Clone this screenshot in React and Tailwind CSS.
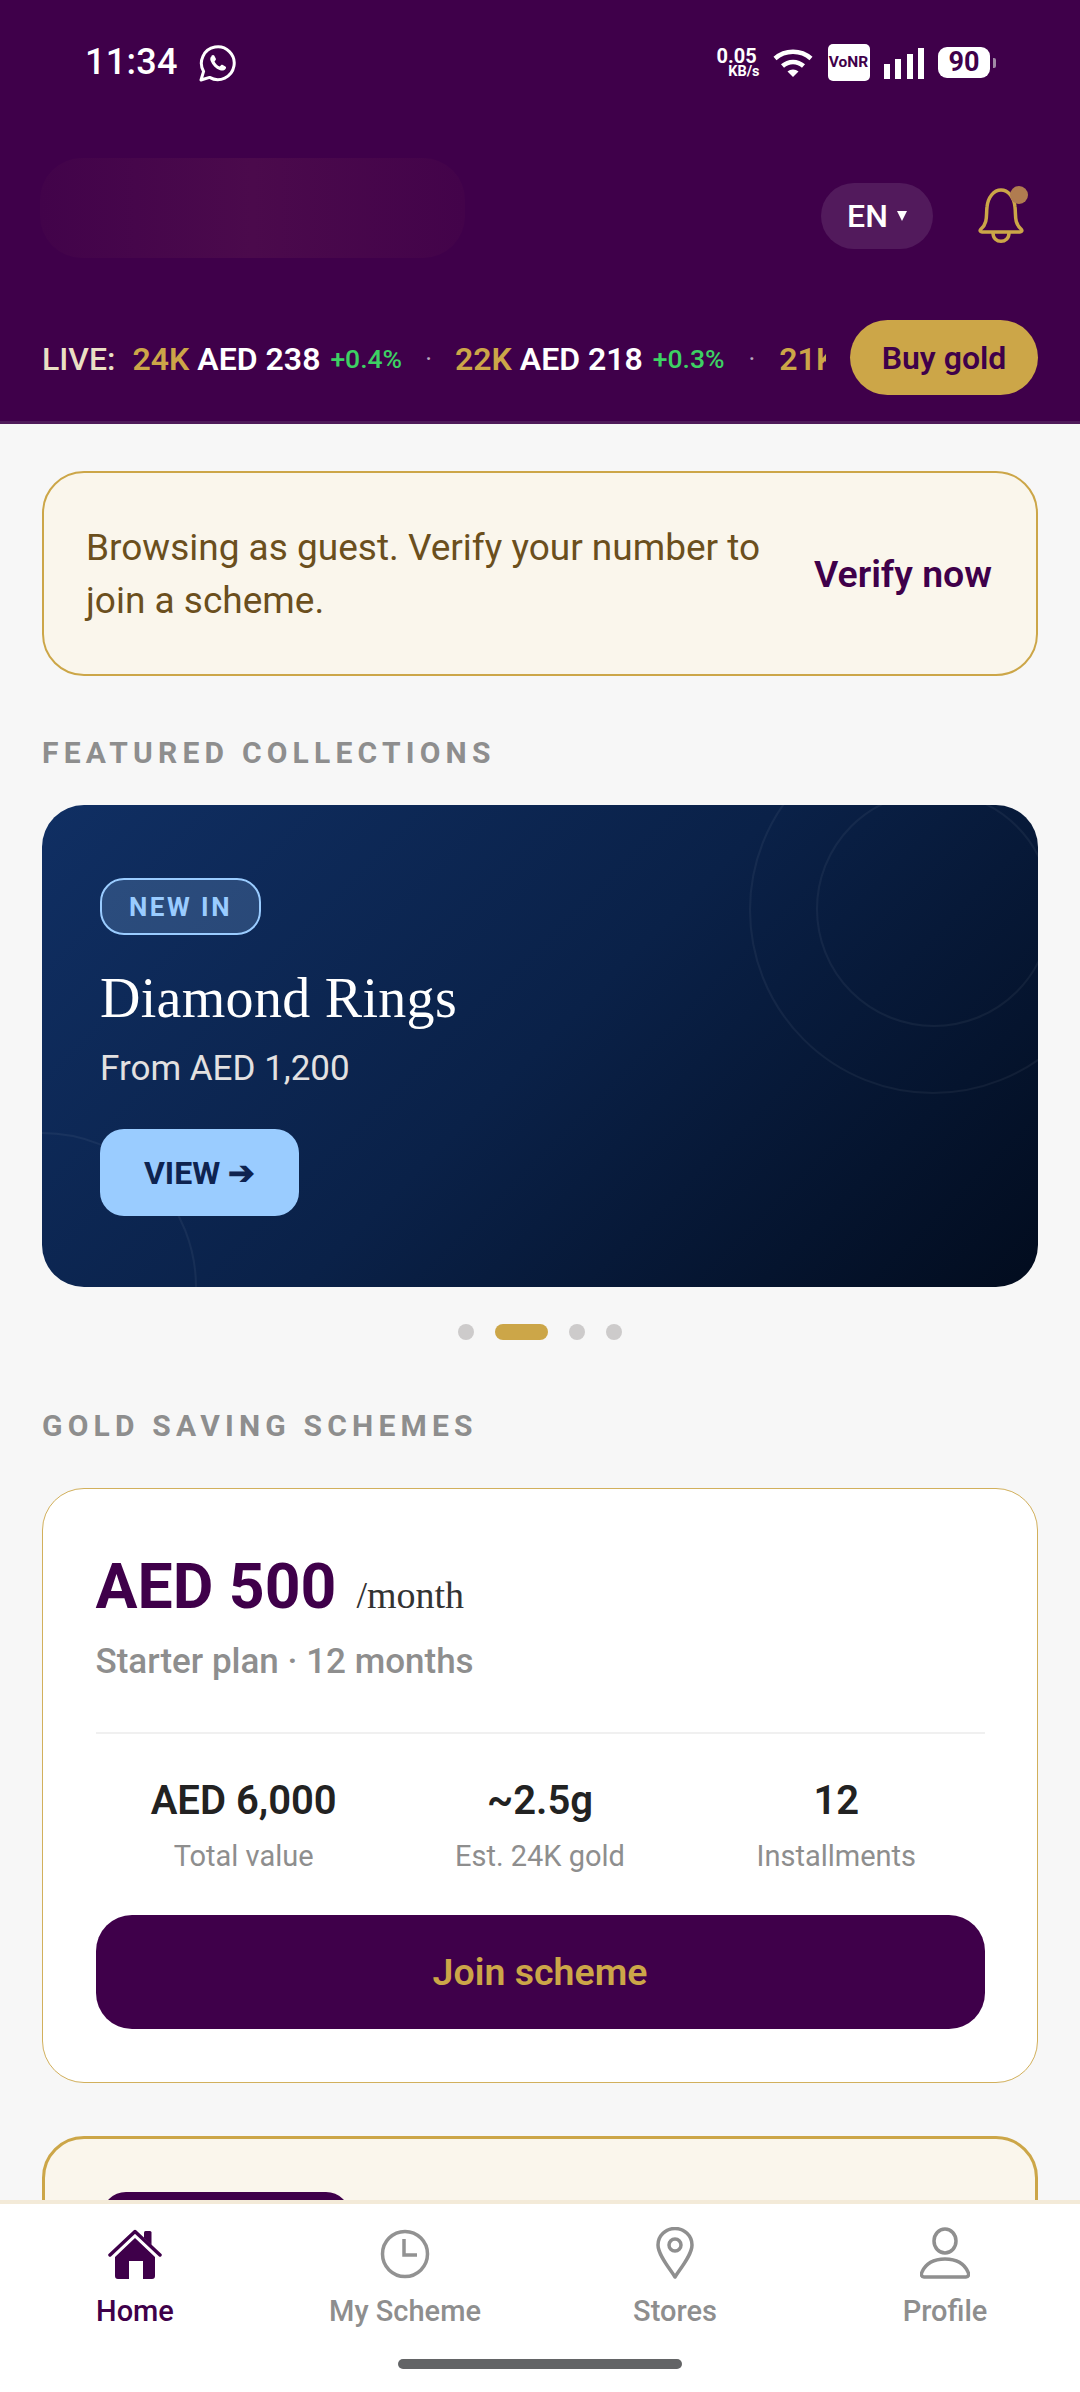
export default function App() {
  const stats = [
    ["AED 6,000", "Total value"],
    ["~2.5g", "Est. 24K gold"],
    ["12", "Installments"],
  ];
  return (
    <div className="w-[1080px] h-[2392px] overflow-hidden flex flex-col bg-[#f7f7f7] font-['Roboto',sans-serif]">
      {/* Header */}
      <header className="h-[424px] shrink-0 bg-[#3f004a] border-b-[3px] border-[#4f1a5a] flex flex-col">
        <div className="h-[124px] shrink-0 pl-[85px] pr-[84px] pt-[42px] flex items-start justify-between">
          <div className="flex items-center gap-[20px] h-[40px]">
            <span className="text-[36px] leading-[40px] font-medium text-white tracking-[0.3px]">11:34</span>
            <svg width="38" height="38" viewBox="0 0 38 38" className="mt-[3px]">
              <path d="M3 35 L5.600 26.400 A16.400 16.400 0 1 1 11.600 32.400 Z" fill="none" stroke="#fff" strokeWidth="3" strokeLinejoin="round" />
              <path d="M13.600 10.600 c1-.9 2-.9 2.600 0 l1.600 2.800 c.3.7.2 1.200-.3 1.800 l-1 1.200 c1 2.200 2.900 4.100 5.200 5.100 l1.300-1.300 c.5-.5 1.100-.6 1.800-.2 l2.600 1.500 c.8.5.9 1.500.1 2.400 c-1.300 1.600-3.200 2.100-5.400 1.300 c-4.500-1.600-8-5-9.500-9.400 c-.7-2-.3-3.600 1-4.600 Z" fill="#fff" />
            </svg>
          </div>
          <div className="flex items-start h-[40px] pt-[3px]">
            <div className="flex flex-col items-end text-white font-bold mt-[3px] w-[43px]">
              <span className="text-[20px] leading-[17px] self-start">0.05</span>
              <span className="text-[14.500px] leading-[14px]">KB/s</span>
            </div>
            <svg width="40" height="30" viewBox="0 0 40 30" className="ml-[13px] mt-[3px]">
              <path d="M2 10.500 C12 1.500 28 1.500 38 10.500" fill="none" stroke="#fff" strokeWidth="4.500" />
              <path d="M9.500 18 C15.500 12.500 24.500 12.500 30.500 18" fill="none" stroke="#fff" strokeWidth="4.500" />
              <path d="M14.500 23.500 C17.500 20.800 22.500 20.800 25.500 23.500 L20 29 Z" fill="#fff" />
            </svg>
            <div className="ml-[15px] w-[42px] h-[37px] -mt-[1px] rounded-[5px] bg-white flex items-center justify-center text-[#3f004a] text-[15.500px] font-bold">VoNR</div>
            <div className="ml-[14px] mt-[3px] h-[31px] flex items-end gap-[5.500px]">
              <div className="w-[6px] h-[15px] bg-white" />
              <div className="w-[6px] h-[20px] bg-white" />
              <div className="w-[6px] h-[25px] bg-white" />
              <div className="w-[6px] h-[31px] bg-white" />
            </div>
            <div className="ml-[14px] mt-[2px] w-[52px] h-[31px] rounded-[9px] bg-white flex items-center justify-center text-[#3f004a] text-[27px] font-bold">90</div>
            <div className="ml-[3px] mt-[13px] w-[3px] h-[10px] rounded-r-[2px] bg-[#a08aa5]" />
          </div>
        </div>
        <div className="h-[196px] shrink-0 pl-[40px] pr-[42px] flex items-center justify-between">
          <div className="w-[425px] h-[100px] -mt-[28px] rounded-[42px] bg-gradient-to-r from-[#42034a] via-[#4b0a4c] to-[#43034a]" />
          <div className="flex items-center -mt-[12px]">
            <div className="w-[112px] h-[66px] mr-[43px] rounded-full bg-[#521a5c] flex items-center justify-center gap-[9px] text-white">
              <span className="text-[32px] font-medium">EN</span>
              <span className="w-0 h-0 border-l-[5px] border-r-[5px] border-t-[10px] border-l-transparent border-r-transparent border-t-white" />
            </div>
            <div className="relative w-[52px] h-[60px] mr-[10px] -mt-[2px]">
              <svg width="52" height="60" viewBox="0 0 52 60">
                <path d="M5 44 C12 38 10 30 11 22 C12 12 18 5 25 5 C32 5 38 12 39 22 C40 30 38 38 45 44 C46.500 45.500 46 47 44 47 L6 47 C4 47 3.500 45.500 5 44 Z" fill="none" stroke="#cca648" strokeWidth="3.500" strokeLinejoin="round" />
                <path d="M17 48 C17 59 33 59 33 48" fill="none" stroke="#cca648" strokeWidth="3.500" />
              </svg>
              <span className="absolute right-0 top-[1px] w-[18px] h-[18px] rounded-full bg-[#b07c50]" />
            </div>
          </div>
        </div>
        <div className="flex-1 pl-[42px] pr-[42px] flex items-start justify-between">
          <div className="w-[784px] h-[76px] pt-[2px] overflow-hidden flex items-center whitespace-nowrap">
            <span className="text-[32px] font-medium text-[#eadfc4] mr-[17px]">LIVE:</span>
            <span className="text-[32px] font-semibold text-[#cca648] mr-[8px]">24K</span>
            <span className="text-[32px] font-semibold text-white mr-[10px]">AED 238</span>
            <span className="text-[26.500px] font-medium text-[#3dd163]">+0.4%</span>
            <span className="text-[26px] text-[#b9a8bd] mx-[23px]">·</span>
            <span className="text-[32px] font-semibold text-[#cca648] mr-[8px]">22K</span>
            <span className="text-[32px] font-semibold text-white mr-[10px]">AED 218</span>
            <span className="text-[26.500px] font-medium text-[#3dd163]">+0.3%</span>
            <span className="text-[26px] text-[#b9a8bd] mx-[24px]">·</span>
            <span className="text-[32px] font-semibold text-[#cca648]">21K</span>
          </div>
          <button className="w-[188px] h-[75px] rounded-full bg-[#cca648] text-[#3f004a] text-[32px] font-semibold">Buy gold</button>
        </div>
      </header>

      {/* Scrolling content */}
      <main className="flex-1 min-h-0 overflow-hidden px-[42px] pt-[47px]">
        <section className="h-[205px] rounded-[42px] border-2 border-[#cca648] bg-[#faf6ec] pl-[42px] pr-[44px] flex items-center justify-between">
          <p className="w-[700px] text-[37px] leading-[53px] text-[#6b4f1d]">Browsing as guest. Verify your number to join a scheme.</p>
          <span className="text-[37.500px] font-semibold text-[#3f004a] mt-[2px] whitespace-nowrap">Verify now</span>
        </section>

        <h2 className="mt-[59px] h-[36px] leading-[36px] text-[30px] font-bold tracking-[5.200px] text-[#8e8e8e]">FEATURED COLLECTIONS</h2>

        <section className="relative mt-[34px] h-[482px] rounded-[42px] overflow-hidden bg-[linear-gradient(135deg,#102f63_0%,#0a2148_50%,#020c1e_100%)] pl-[58px] pt-[73px]">
          <div className="absolute left-[707px] top-[-79px] w-[368px] h-[368px] rounded-full border-2 border-white/5" />
          <div className="absolute left-[774px] top-[-14px] w-[236px] h-[236px] rounded-full border-2 border-white/5" />
          <div className="absolute left-[-155px] top-[327px] w-[310px] h-[310px] rounded-full border-2 border-white/5" />
          <div className="relative flex flex-col items-start">
            <span className="w-[161px] h-[57px] rounded-[24px] border-2 border-[#9accff] bg-[#9accff]/20 flex items-center justify-center pt-[2px] text-[26px] font-bold tracking-[2.500px] text-[#9accff]">NEW IN</span>
            <h3 className="mt-[31px] text-[56px] leading-[64px] font-normal text-white font-['Liberation_Serif',serif] tracking-[0.3px]">Diamond Rings</h3>
            <p className="mt-[15px] text-[35px] leading-[48px] text-[#e3e1e1]">From AED 1,200</p>
            <button className="mt-[36px] w-[199px] h-[87px] rounded-[24px] bg-[#9accff] text-[#0e2350] text-[32px] font-bold">VIEW ➔</button>
          </div>
        </section>

        <div className="mt-[37px] h-[16px] flex justify-center gap-[21px]">
          <span className="w-[16px] h-[16px] rounded-full bg-[#cdcbcb]" />
          <span className="w-[53px] h-[16px] rounded-full bg-[#cca648]" />
          <span className="w-[16px] h-[16px] rounded-full bg-[#cdcbcb]" />
          <span className="w-[16px] h-[16px] rounded-full bg-[#cdcbcb]" />
        </div>

        <h2 className="mt-[68px] h-[36px] leading-[36px] text-[30px] font-bold tracking-[5.200px] text-[#8e8e8e]">GOLD SAVING SCHEMES</h2>

        <section className="mt-[44px] h-[595px] rounded-[42px] border-[1.500px] border-[#d2b05c] bg-white px-[52.500px] pt-[62px]">
          <div className="flex items-baseline gap-[20px] h-[72px]">
            <span className="text-[62.500px] leading-[72px] font-bold text-[#3f004a]">AED 500</span>
            <span className="text-[38px] text-[#333] font-['Liberation_Serif',serif]">/month</span>
          </div>
          <p className="mt-[15px] text-[35px] leading-[48px] font-medium text-[#8e8e8e]">Starter plan · 12 months</p>
          <div className="mt-[46px] h-[2px] bg-[#f0f0f0]" />
          <div className="mt-[43px] grid grid-cols-3">
            {stats.map(([value, label]) => (
              <div key={label} className="flex flex-col items-center">
                <span className="text-[40px] leading-[48px] font-semibold text-[#222]">{value}</span>
                <span className="mt-[11px] text-[29px] leading-[40px] text-[#8e8e8e]">{label}</span>
              </div>
            ))}
          </div>
          <button className="mt-[39px] w-full h-[114px] rounded-[36px] bg-[#3f004a] text-[#cca648] text-[37.500px] font-semibold">Join scheme</button>
        </section>

        <section className="mt-[53px] h-[200px] rounded-[42px] border-[3.500px] border-[#cca648] bg-[#faf6ec] pl-[57px] pt-[52.500px]">
          <div className="w-[248px] h-[60px] rounded-[24px] bg-[#3f004a]" />
        </section>
      </main>

      {/* Bottom navigation */}
      <nav className="relative z-10 h-[192px] shrink-0 bg-white border-t-[4px] border-[#f3ead8]">
        <div className="grid grid-cols-4 pt-[23px]">
          <NavItem label="Home" active>
            <svg width="54" height="50" viewBox="0 0 54 50">
              <path d="M36 9 V3.500 Q36 2 37.500 2 H42 Q43.500 2 43.500 3.500 V16 Z" fill="#3f004a" />
              <path d="M2 26 L27 2.500 L52 26" fill="none" stroke="#3f004a" strokeWidth="3.500" strokeLinecap="round" strokeLinejoin="round" />
              <path d="M27 9 L47 28 V47 Q47 50 44 50 H35 V32 H21 V50 H10 Q7 50 7 47 V28 Z" fill="#3f004a" />
            </svg>
          </NavItem>
          <NavItem label="My Scheme">
            <svg width="50" height="50" viewBox="0 0 50 50" fill="none" stroke="#929292" strokeWidth="3.500">
              <circle cx="25" cy="25" r="22.500" />
              <path d="M24 10 V26 H37" />
            </svg>
          </NavItem>
          <NavItem label="Stores">
            <svg width="38" height="52" viewBox="0 0 38 52" fill="none" stroke="#8f8f8f" strokeWidth="3.500" strokeLinejoin="round">
              <path d="M19 50 C14 42 2 28 2 18 A17 16.500 0 0 1 36 18 C36 28 24 42 19 50 Z" />
              <circle cx="19" cy="18" r="6" />
            </svg>
          </NavItem>
          <NavItem label="Profile">
            <svg width="50" height="52" viewBox="0 0 50 52" fill="none" stroke="#8f8f8f" strokeWidth="3.500" strokeLinejoin="round">
              <ellipse cx="25" cy="14" rx="11" ry="12" />
              <path d="M4 50 C1 50 1 47 2 45 C6 36 15 32 25 32 C35 32 44 36 48 45 C49 47 49 50 46 50 Z" />
            </svg>
          </NavItem>
        </div>
        <div className="absolute left-[398px] top-[155px] w-[284px] h-[10px] rounded-full bg-[#636466]" />
      </nav>
    </div>
  );
}

function NavItem({ label, active, children }) {
  return (
    <div className="flex flex-col items-center">
      <div className="h-[52px] flex items-end justify-center">{children}</div>
      <span className={active ? "mt-[12px] text-[29px] leading-[40px] font-medium text-[#3f004a]" : "mt-[12px] text-[29px] leading-[40px] font-medium text-[#8e8e8e]"}>{label}</span>
    </div>
  );
}
